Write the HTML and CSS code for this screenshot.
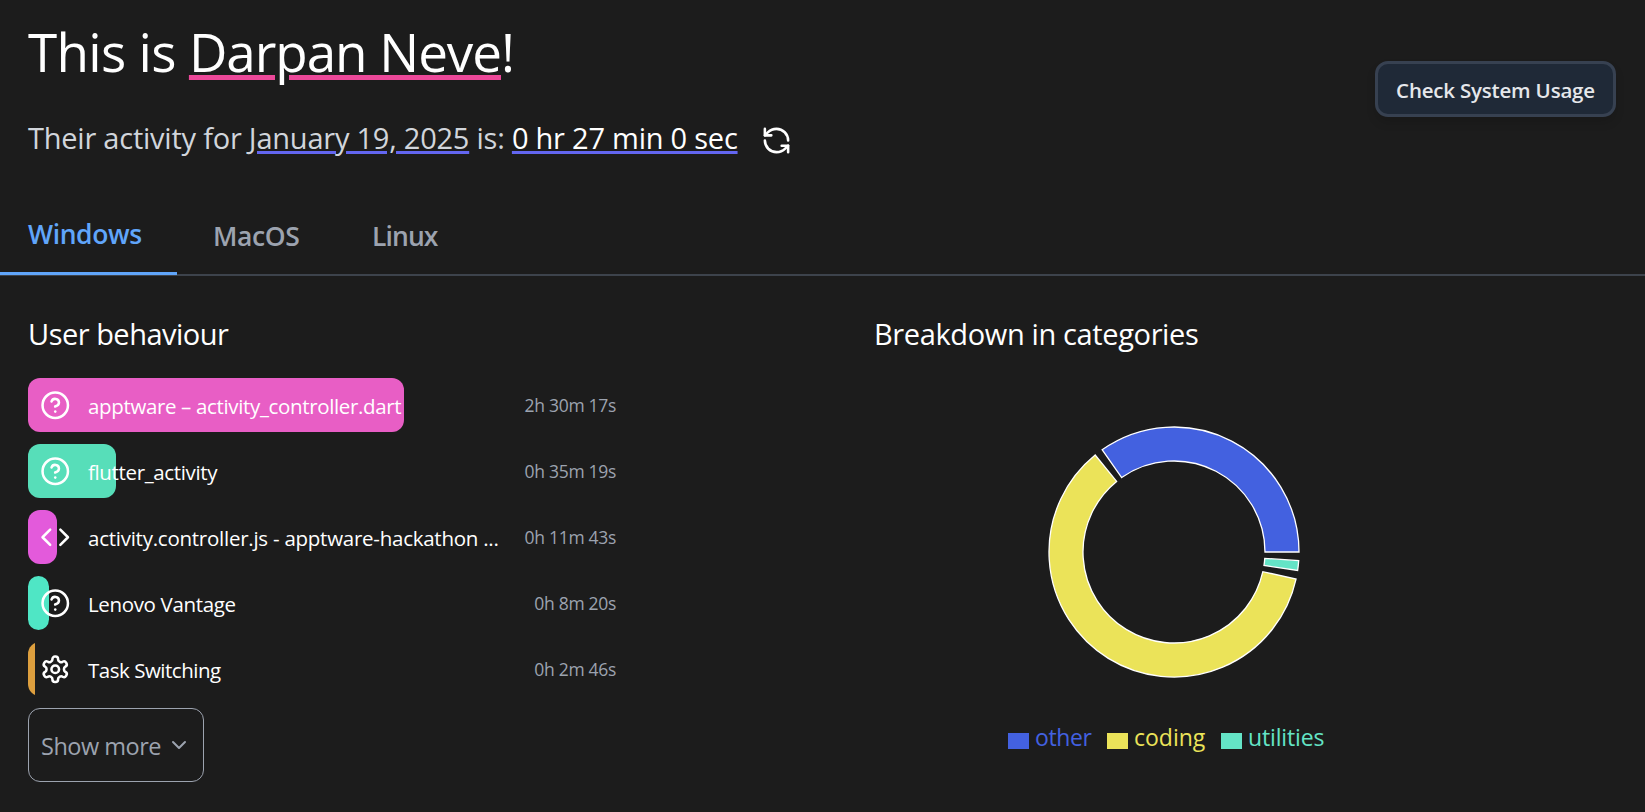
FILE: index.html
```html
<!DOCTYPE html>
<html lang="en">
<head>
<meta charset="utf-8">
<title>Activity</title>
<link rel="stylesheet" href="styles.css">
</head>
<body>
<svg class="sprite" width="0" height="0">
  <symbol id="help" viewBox="0 0 24 24"><circle cx="12" cy="12" r="10"/><path d="M9.09 9a3 3 0 0 1 5.83 1c0 2-3 3-3 3"/><path d="M12 17h.01"/></symbol>
  <symbol id="code" viewBox="0 0 24 24"><path d="m16 18 6-6-6-6"/><path d="m8 6-6 6 6 6"/></symbol>
  <symbol id="gear" viewBox="0 0 24 24"><path d="M12.22 2h-.44a2 2 0 0 0-2 2v.18a2 2 0 0 1-1 1.73l-.43.25a2 2 0 0 1-2 0l-.15-.08a2 2 0 0 0-2.73.73l-.22.38a2 2 0 0 0 .73 2.73l.15.1a2 2 0 0 1 1 1.72v.51a2 2 0 0 1-1 1.74l-.15.09a2 2 0 0 0-.73 2.73l.22.38a2 2 0 0 0 2.73.73l.15-.08a2 2 0 0 1 2 0l.43.25a2 2 0 0 1 1 1.73V20a2 2 0 0 0 2 2h.44a2 2 0 0 0 2-2v-.18a2 2 0 0 1 1-1.73l.43-.25a2 2 0 0 1 2 0l.15.08a2 2 0 0 0 2.73-.73l.22-.39a2 2 0 0 0-.73-2.73l-.15-.08a2 2 0 0 1-1-1.74v-.5a2 2 0 0 1 1-1.74l.15-.09a2 2 0 0 0 .73-2.73l-.22-.38a2 2 0 0 0-2.73-.73l-.15.08a2 2 0 0 1-2 0l-.43-.25a2 2 0 0 1-1-1.73V4a2 2 0 0 0-2-2z"/><circle cx="12" cy="12" r="3"/></symbol>
</svg>
<header class="header">
  <div class="intro">
    <h1 class="title">This is <span class="name">Darpan Neve</span>!</h1>
    <p class="summary"><span>Their activity for </span><span class="date">January 19, 2025</span><span> is: </span><span class="total">0 hr 27 min 0 sec</span>
      <svg class="refresh icon" viewBox="0 0 24 24"><path d="M21 12a9 9 0 0 0-9-9 9.75 9.75 0 0 0-6.74 2.74L3 8"/><path d="M3 3v5h5"/><path d="M3 12a9 9 0 0 0 9 9 9.75 9.75 0 0 0 6.74-2.74L21 16"/><path d="M16 16h5v5"/></svg>
    </p>
  </div>
  <button class="usage">Check System Usage</button>
</header>
<nav class="tabs">
  <a class="tab active">Windows</a>
  <a class="tab macos">MacOS</a>
  <a class="tab linux">Linux</a>
</nav>
<main class="main">
  <section class="behaviour">
    <h2 class="heading">User behaviour</h2>
    <ul class="list">
      <li class="row"><span class="bar pink" style="width:376px"></span><svg class="icon"><use href="#help"/></svg><span class="app">apptware – activity_controller.dart</span><span class="time">2h 30m 17s</span></li>
      <li class="row"><span class="bar mint" style="width:88px"></span><svg class="icon"><use href="#help"/></svg><span class="app">flutter_activity</span><span class="time">0h 35m 19s</span></li>
      <li class="row"><span class="bar orchid" style="width:29px"></span><svg class="icon"><use href="#code"/></svg><span class="app long">activity.controller.js - apptware-hackathon ...</span><span class="time">0h 11m 43s</span></li>
      <li class="row"><span class="bar aqua" style="width:21px"></span><svg class="icon"><use href="#help"/></svg><span class="app">Lenovo Vantage</span><span class="time">0h 8m 20s</span></li>
      <li class="row"><span class="bar amber" style="width:7px"></span><svg class="icon"><use href="#gear"/></svg><span class="app short">Task Switching</span><span class="time">0h 2m 46s</span></li>
    </ul>
    <button class="more"><span class="more-label">Show more</span><svg class="chevron" viewBox="0 0 24 24"><path d="m6 9 6 6 6-6"/></svg></button>
  </section>
  <section class="breakdown">
    <h2 class="heading wide">Breakdown in categories</h2>
    <svg class="donut" viewBox="-126 -126 252 252" id="donut"></svg>
    <ul class="legend">
      <li class="key other"><i class="swatch"></i>other</li>
      <li class="key coding"><i class="swatch"></i>coding</li>
      <li class="key utilities"><i class="swatch"></i>utilities</li>
    </ul>
  </section>
</main>
<script src="chart.js"></script>
</body>
</html>
```
FILE: chart.js
```js
// Draws the ring segments; angles are degrees counter-clockwise from three o'clock.
const OUTER = 125, INNER = 91;
const segments = [
  { from: 0, to: 125.1, color: "#4361e0" },
  { from: 129.1, to: 347.5, color: "#ebe359" },
  { from: 351.5, to: 356, color: "#64e4c6" }
];
const point = (r, deg) => {
  const a = deg * Math.PI / 180;
  return (r * Math.cos(a)).toFixed(2) + " " + (-r * Math.sin(a)).toFixed(2);
};
const donut = document.getElementById("donut");
for (const s of segments) {
  const large = s.to - s.from > 180 ? 1 : 0;
  const path = document.createElementNS("http://www.w3.org/2000/svg", "path");
  path.setAttribute("d",
    `M${point(OUTER, s.from)}A${OUTER} ${OUTER} 0 ${large} 0 ${point(OUTER, s.to)}` +
    `L${point(INNER, s.to)}A${INNER} ${INNER} 0 ${large} 1 ${point(INNER, s.from)}Z`);
  path.setAttribute("fill", s.color);
  donut.append(path);
}
```
FILE: styles.css
```css
* { box-sizing: border-box; margin: 0; padding: 0; }
body { background: #1c1c1c; color: #fff; font-family: "Open Sans", "Noto Sans", sans-serif; height: 812px; overflow: hidden; }
.sprite { display: block; }
ul { list-style: none; }
button { font-family: inherit; }
.icon { width: 30.5px; height: 30.5px; fill: none; stroke: #fff; stroke-width: 2; stroke-linecap: round; stroke-linejoin: round; flex: none; }

.header { display: flex; justify-content: space-between; align-items: flex-start; height: 200px; padding: 20px 29px 0 28px; }
.title { font-size: 53px; line-height: 64px; font-weight: 400; letter-spacing: -.7px; white-space: pre; }
.name { letter-spacing: -1.05px; text-decoration: underline #ec4899 5px; text-underline-offset: 3px; }
.summary { display: flex; align-items: center; margin-top: 34px; font-size: 29px; line-height: 40px; letter-spacing: -.23px; color: #d1d5db; white-space: pre; }
.date, .total { text-decoration: underline #6366f1 3px; text-underline-offset: 2px; }
.total { color: #fff; }
.refresh { width: 31px; height: 31px; margin: 4px 0 0 23px; }
.usage { height: 56px; width: 241px; margin-top: 41px; padding-top: 1px; border: 3px solid #374151; border-radius: 13px; background: #1f2937; color: #e5e7eb; font-size: 20.5px; font-weight: 600; letter-spacing: -.2px; box-shadow: 0 6px 10px rgba(0,0,0,.12); white-space: nowrap; }

.tabs { display: flex; height: 76px; border-bottom: 2px solid #3d434c; }
.tab { height: 75px; padding: 18px 0 0 36px; font-size: 26.5px; line-height: 36px; font-weight: 600; letter-spacing: -.4px; color: #9ca3af; }
.active { width: 177px; padding: 16px 0 0 28px; color: #60a5fa; border-bottom: 3px solid #60a5fa; }
.macos { width: 159px; }
.linux { letter-spacing: -.9px; }

.main { display: grid; grid-template-columns: 846px 1fr; padding: 38px 0 0 28px; }
.heading { font-size: 29px; line-height: 40px; font-weight: 400; letter-spacing: -.5px; white-space: nowrap; }
.wide { letter-spacing: -.37px; }
.list { display: grid; gap: 12px; width: 588px; margin-top: 24px; }
.row { position: relative; display: flex; align-items: center; height: 54px; padding-left: 11.75px; }
.row .icon { position: relative; }
.bar { position: absolute; left: 0; top: 0; height: 54px; border-radius: 12px; }
.pink { background: #e85ec5; }
.mint { background: #57deb9; }
.orchid { background: #e35adb; }
.aqua { background: #4fe6c5; }
.amber { border-radius: 0; overflow: hidden; }
.amber::before { content: ""; display: block; width: 24px; height: 54px; border-radius: 12px; background: #dd9f3e; }
.app { position: relative; margin-left: 17.75px; padding-top: 2px; font-size: 20.5px; line-height: 30px; letter-spacing: -.35px; white-space: nowrap; }
.long { letter-spacing: -.25px; }
.short { letter-spacing: -.48px; }
.time { margin-left: auto; padding-bottom: 1px; font-size: 17.5px; line-height: 26px; letter-spacing: -.3px; color: #9ca3af; white-space: nowrap; }
.more { display: flex; align-items: center; width: 176px; height: 74px; margin-top: 12px; padding-left: 12px; border: 1px solid #9ca3af; border-radius: 12px; background: none; color: #9ca3af; font-size: 23.5px; letter-spacing: -.5px; white-space: nowrap; }
.more-label { padding-top: 2px; }
.chevron { width: 24px; height: 24px; margin-left: 6px; fill: none; stroke: #9ca3af; stroke-width: 2; stroke-linecap: round; stroke-linejoin: round; }

.donut { display: block; width: 252px; height: 252px; margin: 72px 0 0 174px; stroke: #fff; stroke-width: 1.3; }
.legend { display: flex; margin: 42px 0 0 134px; font-size: 23px; line-height: 34px; letter-spacing: -.15px; }
.key { display: flex; align-items: center; gap: 6px; }
.swatch { width: 21px; height: 16px; margin-top: 7px; background: currentColor; }
.other { width: 99px; color: #4361e0; letter-spacing: -.4px; }
.coding { width: 114px; color: #ebe359; letter-spacing: 0; }
.utilities { color: #64e4c6; }
```
